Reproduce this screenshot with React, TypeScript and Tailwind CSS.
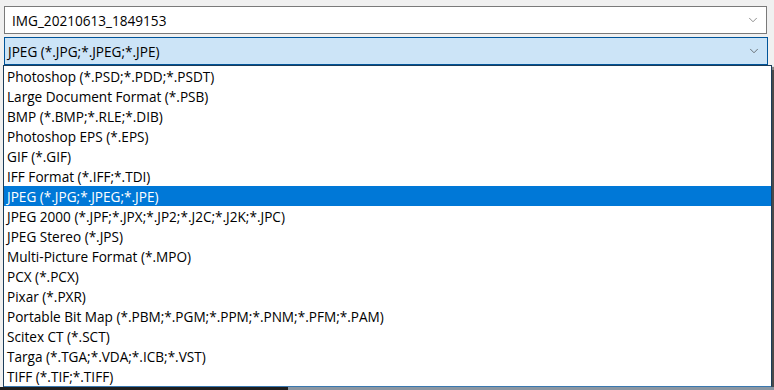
import { ChevronDown } from 'lucide-react';

const formats = [
  'Photoshop (*.PSD;*.PDD;*.PSDT)',
  'Large Document Format (*.PSB)',
  'BMP (*.BMP;*.RLE;*.DIB)',
  'Photoshop EPS (*.EPS)',
  'GIF (*.GIF)',
  'IFF Format (*.IFF;*.TDI)',
  'JPEG (*.JPG;*.JPEG;*.JPE)',
  'JPEG 2000 (*.JPF;*.JPX;*.JP2;*.J2C;*.J2K;*.JPC)',
  'JPEG Stereo (*.JPS)',
  'Multi-Picture Format (*.MPO)',
  'PCX (*.PCX)',
  'Pixar (*.PXR)',
  'Portable Bit Map (*.PBM;*.PGM;*.PPM;*.PNM;*.PFM;*.PAM)',
  'Scitex CT (*.SCT)',
  'Targa (*.TGA;*.VDA;*.ICB;*.VST)',
  'TIFF (*.TIF;*.TIFF)',
];

const selected = 'JPEG (*.JPG;*.JPEG;*.JPE)';

export default function App() {
  return (
    <div className="relative w-[774px] h-[390px] overflow-hidden bg-[#f0f0f0] text-[13.6px] text-black font-['Open_Sans','Noto_Sans',sans-serif]">
      {/* file name field */}
      <div className="pt-[6px] pl-[4px] pr-[7px]">
        <div className="flex items-center h-[28px] bg-white border border-[#7a7a7a] pl-[7px] pr-[6px]">
          <span className="flex-1 leading-none pt-[1px]">IMG_20210613_1849153</span>
          <ChevronDown className="w-[14px] h-[14px] text-[#606060]" strokeWidth={1.2} />
        </div>
      </div>

      {/* format combo */}
      <div className="pt-[3px] pl-[4px] pr-[6px]">
        <div className="flex items-center h-[28px] bg-[#cce4f7] border border-[#005499] pl-[3px] pr-[6px]">
          <span className="flex-1 leading-none pt-[1px]">{selected}</span>
          <ChevronDown className="w-[14px] h-[14px] text-[#404040]" strokeWidth={1.2} />
        </div>
      </div>

      {/* dropdown list */}
      <div className="ml-[3px] mr-[3px] w-[769px] bg-white border border-[#1c3d5a] border-b-2 border-b-[#3a78b0] shadow-[2px_2px_1px_rgba(0,0,0,0.45)] flex flex-col">
        {formats.map((f) => (
          <div
            key={f}
            className={
              f === selected
                ? 'h-[20px] flex items-center pl-[3px] pt-[2px] bg-[#0078d7] text-white'
                : 'h-[20px] flex items-center pl-[3px] pt-[2px]'
            }
          >
            {f}
          </div>
        ))}
      </div>

      {/* bottom strip behind popup */}
      <div className="absolute left-0 bottom-0 w-[774px] h-[3px] flex">
        <div className="w-[288px] bg-[#1e1e1e]" />
        <div className="flex-1 bg-[#8a96a2]" />
      </div>
      <div className="absolute right-0 top-[70px] w-[2px] h-[317px] bg-[#4a4a4a]" />
    </div>
  );
}
